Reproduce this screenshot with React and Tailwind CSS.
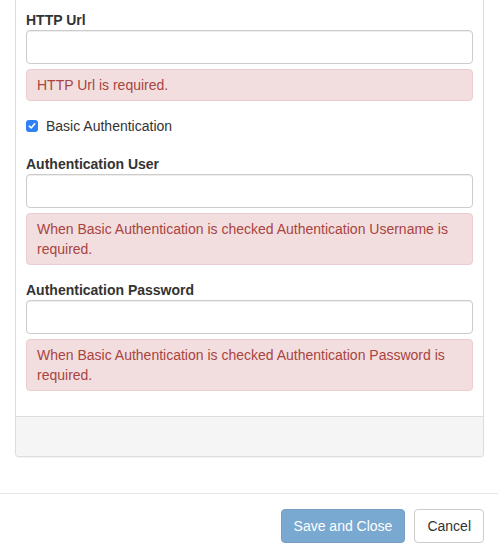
import React, { useState } from 'react';

const font = { fontFamily: '"Liberation Sans", Arial, sans-serif' };

function Field({ label, message, type = 'text', className = '' }) {
  return (
    <div className={className}>
      <label className="block h-[20px] leading-[20px] font-bold text-[14px] text-[#333]">{label}</label>
      <input
        type={type}
        className="block w-full h-[34px] border border-[#ccc] rounded-[4px] bg-white px-3 text-[14px] shadow-[inset_0_1px_1px_rgba(0,0,0,0.075)] outline-none"
      />
      <div className="mt-[5px] border border-[#ebccd1] bg-[#f2dede] text-[#a94442] rounded-[4px] px-[10px] py-[5px] text-[14px] leading-[20px]">
        {message}
      </div>
    </div>
  );
}

export default function App() {
  const [basic, setBasic] = useState(true);

  return (
    <div className="w-[498px] h-[557px] bg-white overflow-hidden text-[14px] text-[#333]" style={font}>
      <div className="ml-[15px] mr-[14px] border-x border-b border-[#ddd] rounded-b-[4px] shadow-[0_1px_1px_rgba(0,0,0,0.05)]">
        <div className="px-[10px] pt-[10px] pb-[25px]">
          <Field label="HTTP Url" message="HTTP Url is required." />

          <div
            className="mt-[15px] flex items-center h-[20px] cursor-pointer select-none"
            onClick={() => setBasic(!basic)}
          >
            <span
              className={`w-[12px] h-[12px] rounded-[3px] flex items-center justify-center ${
                basic ? 'bg-[#2f80f6]' : 'bg-white border border-[#999]'
              }`}
            >
              {basic && (
                <svg width="8" height="8" viewBox="0 0 8 8">
                  <path d="M1.3 4.2 L3.2 6 L6.7 1.8" fill="none" stroke="white" strokeWidth="1.6" strokeLinecap="round" strokeLinejoin="round" />
                </svg>
              )}
            </span>
            <span className="ml-[8px] leading-[20px]">Basic Authentication</span>
          </div>

          <Field
            className="mt-[18px]"
            label="Authentication User"
            message={<>When Basic Authentication is checked Authentication Username is<br />required.</>}
          />
          <Field
            className="mt-[15px]"
            type="password"
            label="Authentication Password"
            message={<>When Basic Authentication is checked Authentication Password is<br />required.</>}
          />
        </div>
        <div className="h-[40px] bg-[#f5f5f5] border-t border-[#ddd] rounded-b-[3px]" />
      </div>

      <div className="mt-[36px] border-t border-[#e5e5e5] pt-[15px] pl-[15px] pr-[14px] flex justify-end gap-[9px]">
        <button
          disabled
          className="h-[34px] px-[12px] rounded-[4px] border border-[#2e6da4] bg-[#337ab7] opacity-65 text-white text-[14px] cursor-not-allowed"
        >
          Save and Close
        </button>
        <button className="h-[34px] px-[12px] rounded-[4px] border border-[#ccc] bg-white text-[#333] text-[14px]">
          Cancel
        </button>
      </div>
    </div>
  );
}
